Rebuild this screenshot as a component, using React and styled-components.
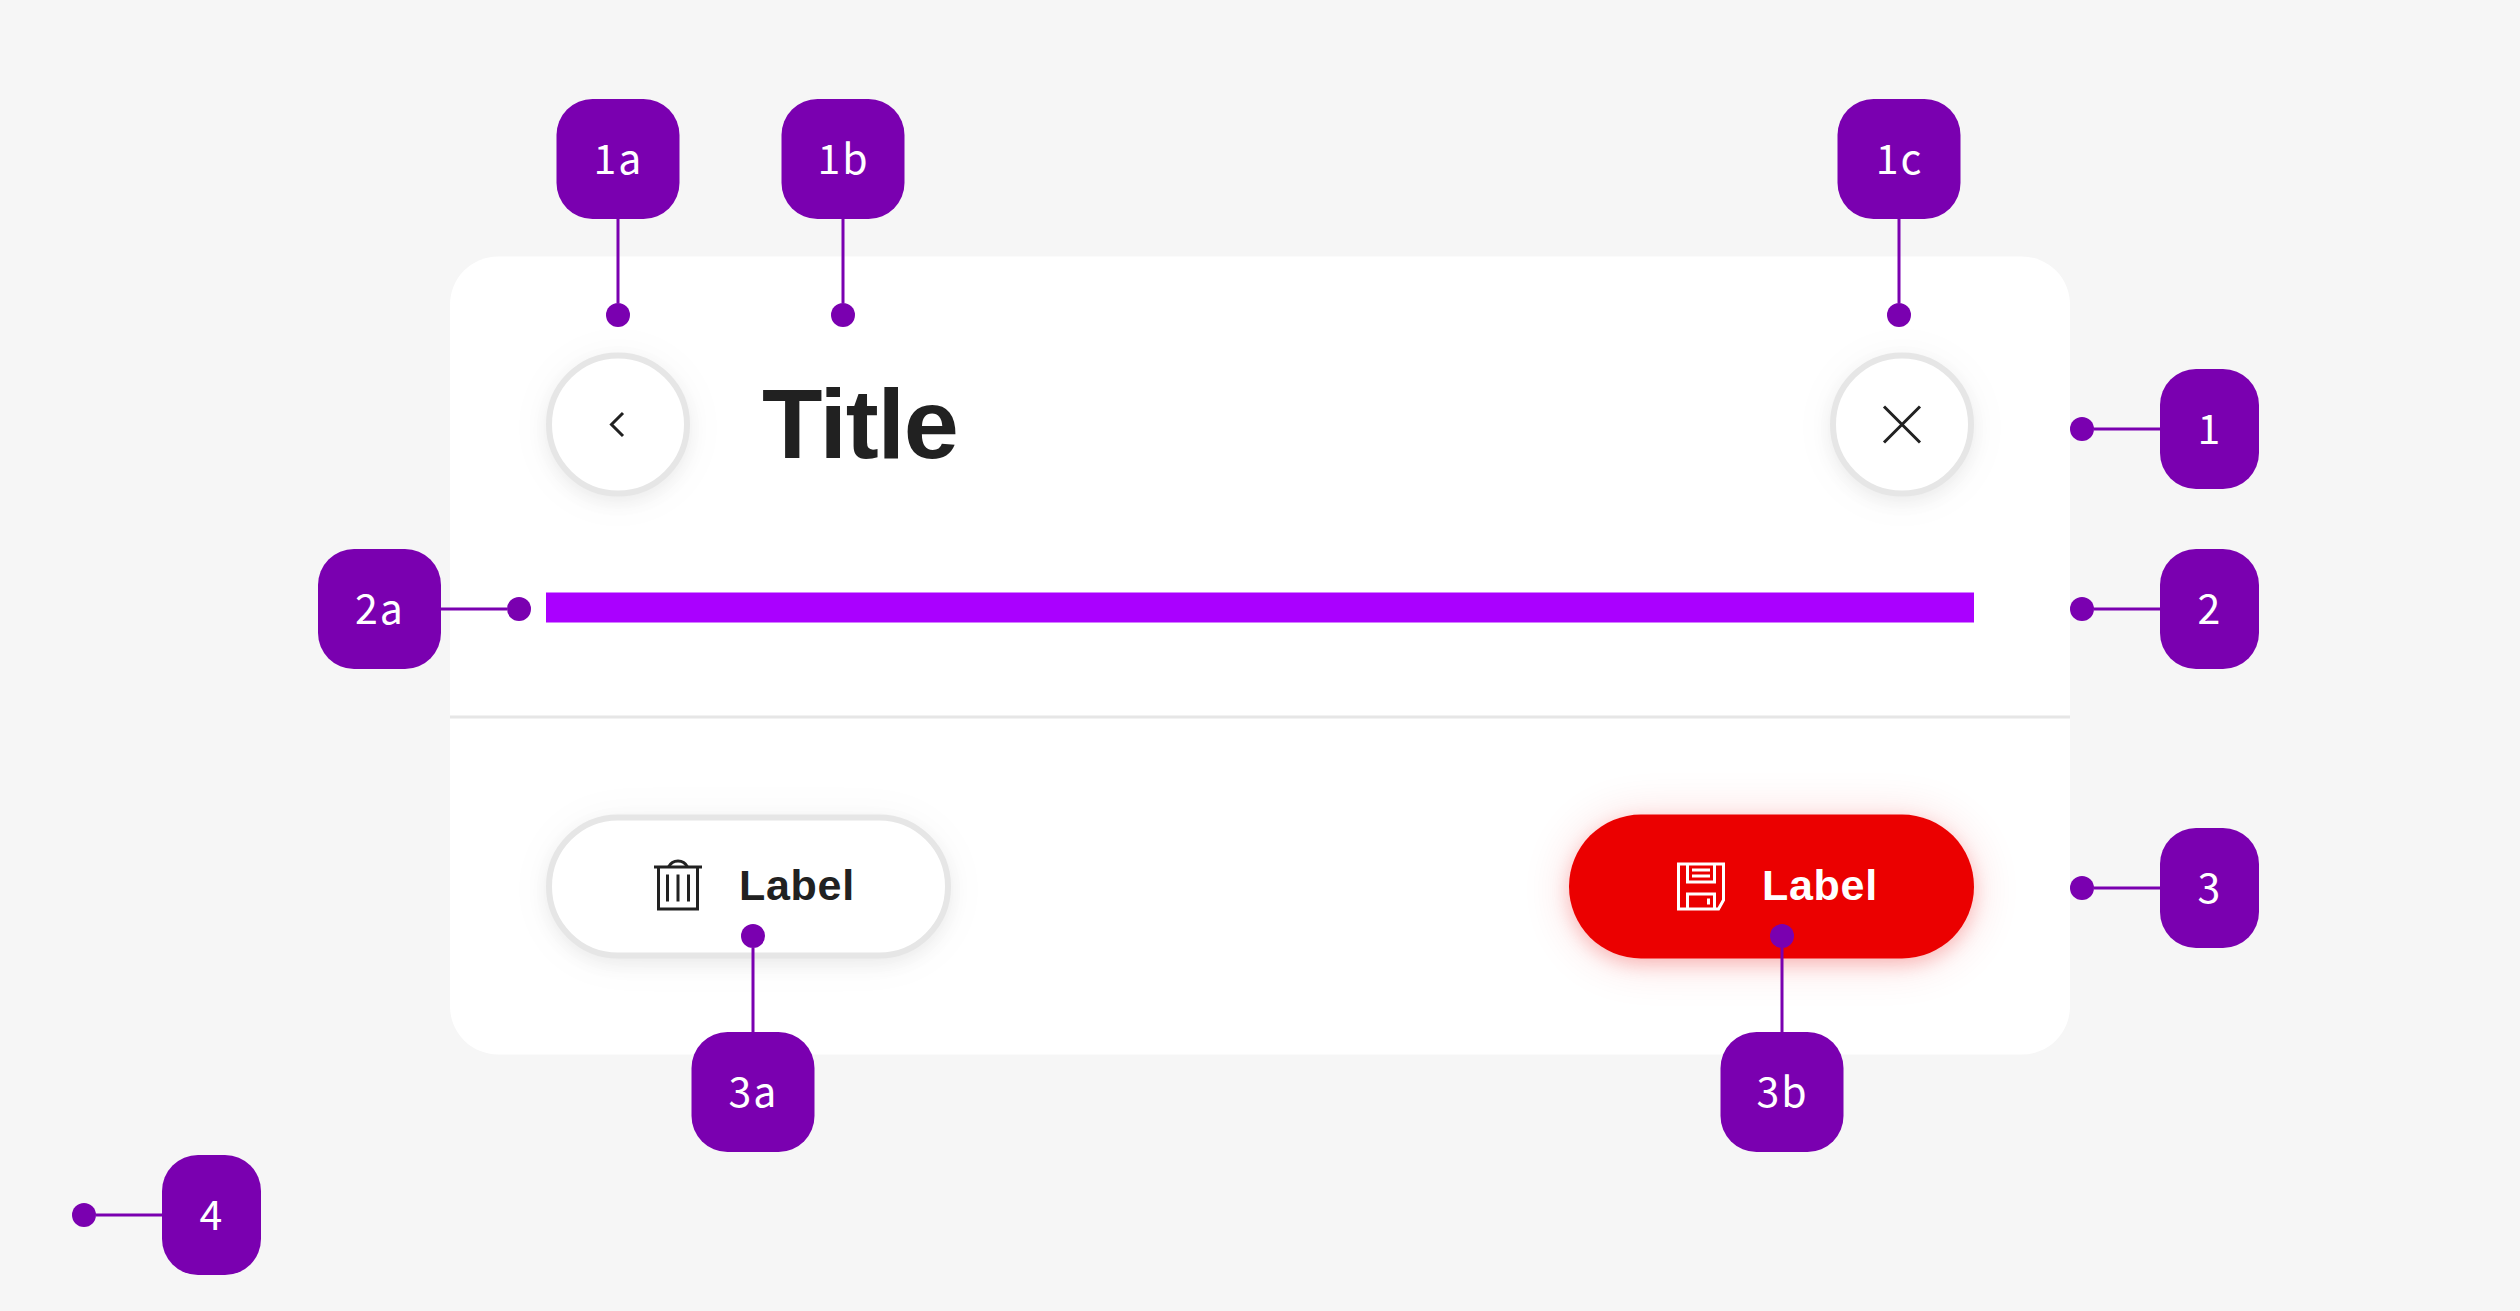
import React from 'react';
import styled, { createGlobalStyle, css } from 'styled-components';

const VIOLET = '#7a00b0';
const VIOLET_HALF = 'rgba(122, 0, 176, 0.5)';

const GlobalStyle = createGlobalStyle`
  body { margin: 0; background: #f6f6f6; }
  * { box-sizing: border-box; }
`;

const Canvas = styled.main`
  position: relative;
  width: 2520px;
  height: 1311px;
  padding-top: 256px;
  overflow: hidden;
  background: #f6f6f6;
  font-family: 'Liberation Sans', Arial, sans-serif;
  color: #212121;
`;

const Card = styled.section`
  display: flex;
  flex-direction: column;
  width: 1620px;
  height: 798px;
  margin: 0 auto;
  border-radius: 48px;
  background: #fff;
  transform: translateY(0.5px);
`;

const Header = styled.header`
  display: flex;
  align-items: center;
  gap: 72px;
  padding: 96px 96px 0;
`;

const RoundButton = styled.button`
  display: flex;
  align-items: center;
  justify-content: center;
  width: 144px;
  height: 144px;
  padding: 0;
  border: 6px solid #e6e6e6;
  border-radius: 50%;
  background: #fff;
  color: inherit;
  box-shadow: 0 6px 18px rgba(0, 0, 0, 0.06), 0 3px 48px rgba(0, 0, 0, 0.04);
`;

const Title = styled.h1`
  flex: 1;
  margin: 0;
  padding-bottom: 2px;
  font-size: 99px;
  line-height: 120px;
  font-weight: 700;
  letter-spacing: -1.2px;
`;

const Content = styled.div`
  padding: 96px 96px 93px;
  border-bottom: 3px solid #e6e6e6;
`;

const Slot = styled.div`
  height: 30px;
  background: #aa00ff;
`;

const Footer = styled.footer`
  display: flex;
  justify-content: space-between;
  padding: 96px;
`;

const ActionButton = styled.button`
  display: flex;
  align-items: center;
  gap: 34px;
  width: 405px;
  height: 144px;
  border-radius: 72px;
  font-family: inherit;
  font-size: 43px;
  font-weight: 700;
  letter-spacing: 0.7px;
  ${({ $primary }) =>
    $primary
      ? css`
          padding: 0 0 0 105px;
          border: 0;
          background: #eb0000;
          color: #fff;
          box-shadow: 0 6px 18px rgba(235, 0, 0, 0.2), 0 3px 48px rgba(235, 0, 0, 0.16);
        `
      : css`
          padding: 0 0 0 99px;
          border: 6px solid #e6e6e6;
          background: #fff;
          color: #212121;
          box-shadow: 0 6px 18px rgba(0, 0, 0, 0.06), 0 3px 48px rgba(0, 0, 0, 0.04);
        `}
`;

const ButtonText = styled.span`
  padding-bottom: 3px;
`;

const Icon = styled.svg.attrs({ width: 54, height: 54, viewBox: '0 0 54 54' })`
  display: block;
  flex: none;
  overflow: visible;
  fill: none;
  stroke: currentColor;
  stroke-width: 3;
`;

/* Callouts float over the card: a label, a leader line and a dot at its end. */
const directions = { down: 'column', up: 'column-reverse', right: 'row', left: 'row-reverse' };
const isVertical = (d) => d === 'down' || d === 'up';

const CalloutBox = styled.div`
  position: absolute;
  left: ${({ $x }) => $x}px;
  top: ${({ $y }) => $y}px;
  display: flex;
  flex-direction: ${({ $dir }) => directions[$dir]};
  align-items: center;
  ${({ $dir }) => isVertical($dir) && 'width: 124px;'}
`;

const Tag = styled.span`
  display: flex;
  align-items: center;
  justify-content: center;
  width: ${({ $wide }) => ($wide ? 123 : 99)}px;
  height: 120px;
  padding: 0 0 7px 1px;
  border-radius: 36px;
  background: ${VIOLET};
  color: #fff;
  font-family: 'Noto Sans CJK JP', 'Noto Sans CJK SC', sans-serif;
  font-size: 41px;
  line-height: 60px;
  font-weight: 400;
  letter-spacing: 2px;
  ${({ $dir }) => isVertical($dir) && 'align-self: flex-start; transform: translateX(0.5px);'}
`;

const Leader = styled.span`
  width: ${({ $dir }) => (isVertical($dir) ? 4 : 66)}px;
  height: ${({ $dir }) => (isVertical($dir) ? 84 : 4)}px;
  background: linear-gradient(
    ${({ $dir }) => (isVertical($dir) ? 'to right' : 'to bottom')},
    ${VIOLET_HALF} 0 1px,
    ${VIOLET} 1px 3px,
    ${VIOLET_HALF} 3px 4px
  );
`;

const Dot = styled.span`
  width: 24px;
  height: 24px;
  border-radius: 50%;
  background: ${VIOLET};
`;

const callouts = [
  { label: '1a', dir: 'down', x: 556, y: 99 },
  { label: '1b', dir: 'down', x: 781, y: 99 },
  { label: '1c', dir: 'down', x: 1837, y: 99 },
  { label: '1', dir: 'left', x: 2070, y: 369 },
  { label: '2a', dir: 'right', x: 318, y: 549 },
  { label: '2', dir: 'left', x: 2070, y: 549 },
  { label: '3a', dir: 'up', x: 691, y: 924 },
  { label: '3b', dir: 'up', x: 1720, y: 924 },
  { label: '3', dir: 'left', x: 2070, y: 828 },
  { label: '4', dir: 'left', x: 72, y: 1155 },
];

function Callout({ label, dir, x, y }) {
  return (
    <CalloutBox $dir={dir} $x={x} $y={y}>
      <Tag $dir={dir} $wide={label.length > 1}>{label}</Tag>
      <Leader $dir={dir} />
      <Dot />
    </CalloutBox>
  );
}

const BackIcon = () => (
  <Icon><path d="M32 15.5 20.5 27 32 38.5" /></Icon>
);

const CloseIcon = () => (
  <Icon><path d="M9 9 45 45M45 9 9 45" /></Icon>
);

const TrashIcon = () => (
  <Icon>
    <path d="M3 7.5H51M7.5 7.5V49.5H46.5V7.5M16.5 15V42M27 15V42M37.5 15V42" />
    <path d="M17.5 7.5C19.5 3.5 23 1.5 27 1.5S34.5 3.5 36.5 7.5" />
  </Icon>
);

const SaveIcon = () => (
  <Icon>
    <path d="M4.5 4.5H49.5V40.5L44.5 49.5H4.5Z" />
    <path d="M13.5 4.5V22.5H40.5V4.5M18 10.5H36M18 16.5H36" />
    <path d="M13.5 49.5V34.5H40.5V49.5M34.5 39V45" />
  </Icon>
);

export default function App() {
  return (
    <>
      <GlobalStyle />
      <Canvas>
        <Card>
          <Header>
            <RoundButton aria-label="Back"><BackIcon /></RoundButton>
            <Title>Title</Title>
            <RoundButton aria-label="Close"><CloseIcon /></RoundButton>
          </Header>
          <Content><Slot /></Content>
          <Footer>
            <ActionButton><TrashIcon /><ButtonText>Label</ButtonText></ActionButton>
            <ActionButton $primary><SaveIcon /><ButtonText>Label</ButtonText></ActionButton>
          </Footer>
        </Card>
        {callouts.map((c) => <Callout key={c.label} {...c} />)}
      </Canvas>
    </>
  );
}
